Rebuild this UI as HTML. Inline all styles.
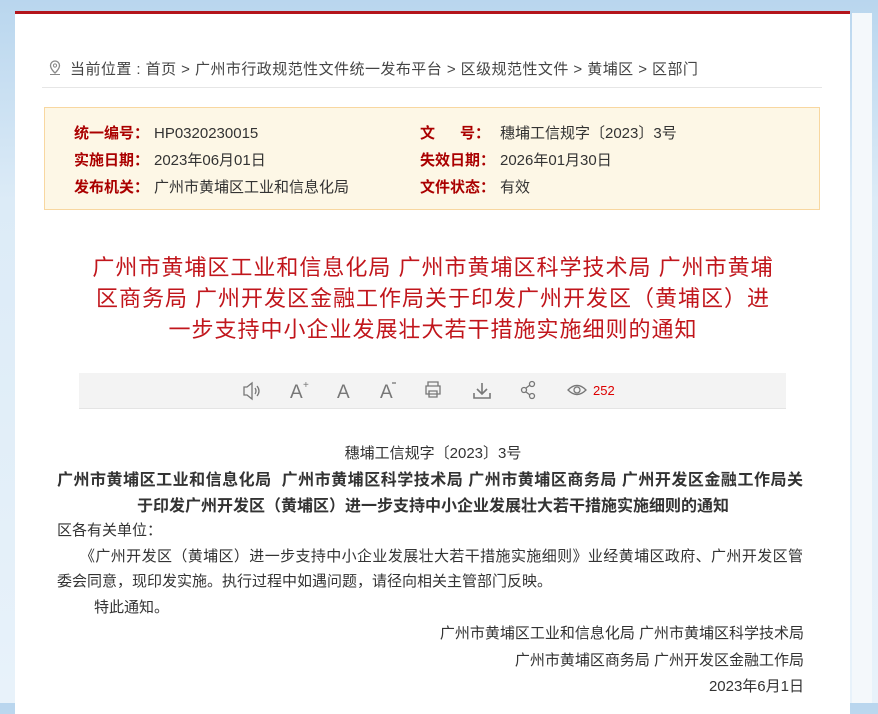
<!DOCTYPE html><html><head><meta charset="utf-8"><style>
body{margin:0;width:878px;height:703px;overflow:hidden;background:linear-gradient(#b9d6ee,#dcebf7 200px,#e8f2fa);font-family:"Liberation Sans","Noto Sans CJK SC",sans-serif;position:relative}
.panel{position:absolute;left:15px;top:11px;width:835px;height:700px;background:#fff;border-top:3px solid #b3151b}
.side{position:absolute;left:852px;top:13px;width:20px;height:690px;background:#f4f8fb}
.a{position:absolute;white-space:nowrap}
.crumb{left:70px;top:58px;font-size:15px;color:#444;letter-spacing:0.45px}
.hr{position:absolute;left:42px;top:87px;width:780px;border-top:1px solid #e6e6e6}
.info{position:absolute;left:44px;top:107px;width:776px;height:103px;background:#fdf7e6;border:1px solid #f8d7a0;box-sizing:border-box}
.info span{position:absolute;font-size:15px;color:#333;white-space:nowrap}
.info b{color:#a00;font-weight:bold;display:inline-block;width:80px}
.title{left:0;width:866px;text-align:center;font-size:22px;letter-spacing:1px;color:#c1161c;line-height:31px;top:252px}
.bar{position:absolute;left:79px;top:373px;width:707px;height:35px;background:#f3f3f3;border-bottom:1px solid #e4e4e4}
.t{font-size:15px;color:#333}
.j{text-align:justify;text-align-last:justify;white-space:normal}
</style></head><body>
<div class="panel"></div><div class="side"></div>
<svg class="a" style="left:48px;top:60px" width="14" height="16" viewBox="0 0 14 16"><path d="M7 1a4.5 4.5 0 0 0-4.5 4.5C2.5 9 7 13 7 13s4.5-4 4.5-7.5A4.5 4.5 0 0 0 7 1z" fill="none" stroke="#888" stroke-width="1.3"/><circle cx="7" cy="5.5" r="1.6" fill="none" stroke="#888"/><path d="M2 14.5h10" stroke="#888"/></svg>
<div class="a crumb">当前位置 : 首页 &gt; 广州市行政规范性文件统一发布平台 &gt; 区级规范性文件 &gt; 黄埔区 &gt; 区部门</div>
<div class="hr"></div>
<div class="info">
<span style="left:29px;top:14px"><b>统一编号：</b>HP0320230015</span>
<span style="left:375px;top:14px"><b>文&nbsp;&nbsp;&nbsp;&nbsp;&nbsp;&nbsp;号：</b>穗埔工信规字〔2023〕3号</span>
<span style="left:29px;top:41px"><b>实施日期：</b>2023年06月01日</span>
<span style="left:375px;top:41px"><b>失效日期：</b>2026年01月30日</span>
<span style="left:29px;top:68px"><b>发布机关：</b>广州市黄埔区工业和信息化局</span>
<span style="left:375px;top:68px"><b>文件状态：</b>有效</span>
</div>
<div class="a title">广州市黄埔区工业和信息化局 广州市黄埔区科学技术局 广州市黄埔<br>区商务局 广州开发区金融工作局关于印发广州开发区（黄埔区）进<br>一步支持中小企业发展壮大若干措施实施细则的通知</div>
<div class="bar"></div>
<svg class="a" style="left:240px;top:378px" width="380" height="26" viewBox="0 0 380 26" fill="none" stroke="#777" stroke-width="1.3">
<path d="M4 9h3l5-4v16l-5-4H4z"/><path d="M15 10q2 3 0 6M17 8q4 5 0 10"/>
<text x="50" y="20" font-size="19" fill="#777" stroke="none" font-family="Liberation Sans">A</text><text x="63" y="10" font-size="10" fill="#777" stroke="none">+</text>
<text x="97" y="20" font-size="19" fill="#777" stroke="none" font-family="Liberation Sans">A</text>
<text x="140" y="20" font-size="19" fill="#777" stroke="none" font-family="Liberation Sans">A</text><path d="M152 5h4"/>
<path d="M188 8V4h10v4M186 8h14v8h-14zM189 13h8v6h-8z"/>
<path d="M242 5v11M237 11l5 5 5-5M234 15v5h16v-5" stroke-width="1.6"/>
<circle cx="292" cy="6" r="2.5"/><circle cx="284" cy="12" r="2.5"/><circle cx="292" cy="18" r="2.5"/><path d="M290 7l-4 3M286 14l4 3"/>
<path d="M328 12q9-9 18 0q-9 9-18 0z"/><circle cx="337" cy="12" r="3"/>
<text x="353" y="17" font-size="13" fill="#d00" stroke="none" font-family="Liberation Sans">252</text>
</svg>
<div class="a t" style="left:0;width:866px;text-align:center;top:442px">穗埔工信规字〔2023〕3号</div>
<div class="a t j" style="left:57px;width:746px;top:466px;font-weight:bold;font-size:16px">广州市黄埔区工业和信息化局&nbsp; 广州市黄埔区科学技术局 广州市黄埔区商务局 广州开发区金融工作局关</div>
<div class="a t" style="left:0;width:866px;text-align:center;top:492px;font-weight:bold;font-size:16px">于印发广州开发区（黄埔区）进一步支持中小企业发展壮大若干措施实施细则的通知</div>
<div class="a t" style="left:57px;top:519px">区各有关单位：</div>
<div class="a t j" style="left:80px;width:723px;top:545px">《广州开发区（黄埔区）进一步支持中小企业发展壮大若干措施实施细则》业经黄埔区政府、广州开发区管</div>
<div class="a t" style="left:57px;top:570px">委会同意，现印发实施。执行过程中如遇问题，请径向相关主管部门反映。</div>
<div class="a t" style="left:94px;top:596px">特此通知。</div>
<div class="a t" style="right:74px;top:622px">广州市黄埔区工业和信息化局 广州市黄埔区科学技术局</div>
<div class="a t" style="right:74px;top:649px">广州市黄埔区商务局 广州开发区金融工作局</div>
<div class="a t" style="right:74px;top:675px">2023年6月1日</div>
</body></html>
